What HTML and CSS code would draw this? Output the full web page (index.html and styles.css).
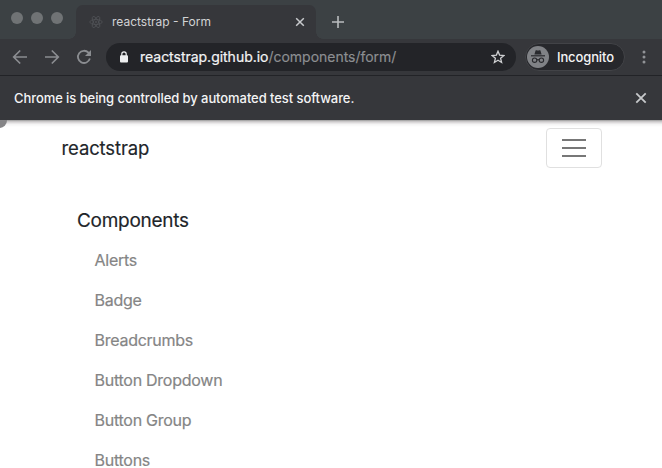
FILE: index.html
```html
<!DOCTYPE html>
<html lang="en">
<head>
<meta charset="utf-8">
<title>reactstrap - Form</title>
<link rel="stylesheet" href="styles.css">
</head>
<body>
<header class="browser">
  <div class="tabstrip">
    <div class="lights"><i></i><i></i><i></i></div>
    <div class="tab">
      <svg class="favicon" width="14" height="14" viewBox="0 0 14 14" fill="none" stroke="#505256" stroke-width=".8"><ellipse cx="7" cy="7" rx="6.2" ry="2.5"/><ellipse cx="7" cy="7" rx="6.2" ry="2.5" transform="rotate(60 7 7)"/><ellipse cx="7" cy="7" rx="6.2" ry="2.5" transform="rotate(120 7 7)"/><circle cx="7" cy="7" r=".8"/></svg>
      <span class="tab-title">reactstrap - Form</span>
      <svg class="tab-close" width="10" height="10" viewBox="0 0 10 10" stroke="#c8cacd" stroke-width="1.5"><path d="M1.2 1.2l7.6 7.6M8.8 1.2L1.2 8.8"/></svg>
    </div>
    <svg class="new-tab" width="12" height="12" viewBox="0 0 12 12" stroke="#b9bcbe" stroke-width="1.6"><path d="M6 0v12M0 6h12"/></svg>
  </div>
  <div class="toolbar">
    <svg class="nav" width="16" height="16" viewBox="0 0 16 16" fill="none" stroke="#8b8d91" stroke-width="1.7"><path d="M15 8H2M8.2 1.5L1.7 8l6.5 6.5"/></svg>
    <svg class="nav" width="16" height="16" viewBox="0 0 16 16" fill="none" stroke="#8b8d91" stroke-width="1.7"><path d="M1 8h13M7.8 1.5L14.3 8l-6.5 6.5"/></svg>
    <svg class="nav" width="16" height="16" viewBox="0 0 16 16" fill="none" stroke="#8b8d91" stroke-width="1.8"><path d="M13.9 9.6A6.1 6.1 0 1 1 12.5 3.7L13.5 5"/><path d="M15 1v6H9z" fill="#8b8d91" stroke="none"/></svg>
    <div class="address">
      <svg class="lock" width="8" height="12" viewBox="0 0 8 12"><rect y="4.2" width="8" height="7.3" rx="1" fill="#eeeff0"/><path d="M1.8 5V3a2.2 2.2 0 0 1 4.4 0v2" fill="none" stroke="#eeeff0" stroke-width="1.2"/></svg>
      <span class="url"><b>reactstrap.github.io</b><span class="path">/components/form/</span></span>
      <svg class="star" width="14" height="14" viewBox="0 0 14 14" fill="none" stroke="#cfd0d2" stroke-width="1.3"><path d="M7 1.2l1.6 3.9 4.3.4-3.3 2.8 1 4.2L7 10.3l-3.6 2.2 1-4.2-3.3-2.8 4.3-.4z"/></svg>
    </div>
    <div class="profile">
      <svg width="22" height="22" viewBox="0 0 22 22"><circle cx="11" cy="11" r="11" fill="#808286"/><path d="M7.4 8.4l1.1-3.7c.2-.6.7-.6 1.1-.4.9.4 1.9.4 2.8 0 .5-.2.9-.2 1.1.4l1.1 3.7z" fill="#292a2e"/><path d="M4 9.8h14" stroke="#292a2e" stroke-width="1.2"/><g fill="none" stroke="#292a2e" stroke-width="1.1"><circle cx="7.6" cy="14.2" r="2.2"/><circle cx="14.4" cy="14.2" r="2.2"/><path d="M9.8 14q1.2-.7 2.4 0"/></g></svg>
      <span>Incognito</span>
    </div>
    <svg class="menu" width="4" height="14" viewBox="0 0 4 14" fill="#919397"><circle cx="2" cy="2" r="1.5"/><circle cx="2" cy="7" r="1.5"/><circle cx="2" cy="12" r="1.5"/></svg>
  </div>
  <div class="infobar">
    <span>Chrome is being controlled by automated test software.</span>
    <svg width="12" height="12" viewBox="0 0 12 12" stroke="#c7c9cb" stroke-width="1.8"><path d="M1.3 1.3l9.4 9.4M10.7 1.3l-9.4 9.4"/></svg>
  </div>
</header>
<main class="page">
  <i class="corner"></i>
  <nav class="navbar">
    <span class="brand">reactstrap</span>
    <button class="toggler" aria-label="Toggle navigation"><svg width="30" height="30" viewBox="0 0 30 30" stroke="#777" stroke-width="2"><path d="M3 7h24M3 15h24M3 23h24"/></svg></button>
  </nav>
  <section class="sidebar">
    <h5>Components</h5>
    <ul>
      <li>Alerts</li>
      <li>Badge</li>
      <li>Breadcrumbs</li>
      <li>Button Dropdown</li>
      <li>Button Group</li>
      <li>Buttons</li>
    </ul>
  </section>
</main>
</body>
</html>
```
FILE: styles.css
```css
* { box-sizing: border-box; }
body { margin: 0; width: 662px; height: 468px; overflow: hidden; background: #fff; font-family: Inter, "Liberation Sans", sans-serif; }
svg { display: block; flex: none; }
.browser { background: #36373b; }
.tabstrip { display: flex; height: 39px; background: #3c4144; }
.lights { display: flex; gap: 8px; width: 76px; padding: 12px 0 0 11px; }
.lights i { width: 12px; height: 12px; border-radius: 50%; background: #707375; }
.tab { position: relative; display: flex; align-items: center; width: 240px; height: 34px; margin-top: 5px; padding: 0 11px 0 13px; border-radius: 7px 7px 0 0; background: #36373b; }
.tab::before, .tab::after { content: ""; position: absolute; bottom: 0; width: 7px; height: 7px; }
.tab::before { left: -7px; background: radial-gradient(circle at 0 0, transparent 6.5px, #36373b 7px); }
.tab::after { right: -7px; background: radial-gradient(circle at 100% 0, transparent 6.5px, #36373b 7px); }
.tab-title { margin: 0 0 2px 9px; font-size: 12px; color: #d2d3d5; white-space: nowrap; }
.tab-close { margin-left: auto; }
.new-tab { margin: 16px 0 0 16px; }
.toolbar { display: flex; align-items: center; height: 36px; padding-left: 12px; }
.nav { margin-right: 16px; }
.address { display: flex; align-items: center; width: 410px; height: 28px; margin-left: -2px; padding: 0 11px 0 14px; border-radius: 14px; background: #232428; }
.url { margin: 0 0 2px 12px; font-size: 14px; letter-spacing: -.02px; white-space: nowrap; color: #8d8f92; -webkit-text-stroke: .15px; }
.url b { font-weight: 400; color: #f4f4f5; -webkit-text-stroke: .22px; }
.star { margin-left: auto; }
.profile { display: flex; align-items: center; width: 100px; height: 28px; margin-left: 9px; padding-left: 1px; border: 1px solid #424347; border-radius: 14px; background: #27282c; color: #f4f4f5; font-size: 13px; font-weight: 500; letter-spacing: -.12px; }
.profile span { margin-left: 8px; }
.menu { margin-left: 17px; }
.infobar { display: flex; align-items: center; justify-content: space-between; height: 45px; padding: 0 15px 0 14px; border-top: 1px solid #222327; color: #f4f4f5; font-size: 13px; font-weight: 500; letter-spacing: -.075px; white-space: nowrap; }
.page { position: relative; height: 348px; background: linear-gradient(#999 0, #c9c7c8 1.5px, #e4e2e3 3px, #f5f5f5 4.5px, #fff 7px); }
.corner { position: absolute; left: -8px; top: -7px; width: 15px; height: 15px; border-radius: 50%; background: #858587; clip-path: inset(7px 0 0 8px); }
.navbar { display: flex; justify-content: space-between; align-items: center; height: 56px; padding: 0 60px 0 61.5px; }
.brand { color: #212529; font-size: 18.5px; letter-spacing: -.12px; -webkit-text-stroke: .15px; }
.toggler { width: 56px; height: 40px; padding: 4px 12px; border: 1px solid #e0e0e0; border-radius: 4px; background: #fff; }
.sidebar { padding: 33px 0 0 77px; }
.sidebar h5 { margin: 0; font-size: 19px; font-weight: 400; line-height: 24px; letter-spacing: -.27px; color: #212529; -webkit-text-stroke: .15px; }
.sidebar ul { display: grid; gap: 24px; margin: 19px 0 0 17.5px; padding: 0; list-style: none; }
.sidebar li { height: 16px; line-height: 16px; font-size: 16px; letter-spacing: -.26px; color: #858585; -webkit-text-stroke: .2px; }
```
